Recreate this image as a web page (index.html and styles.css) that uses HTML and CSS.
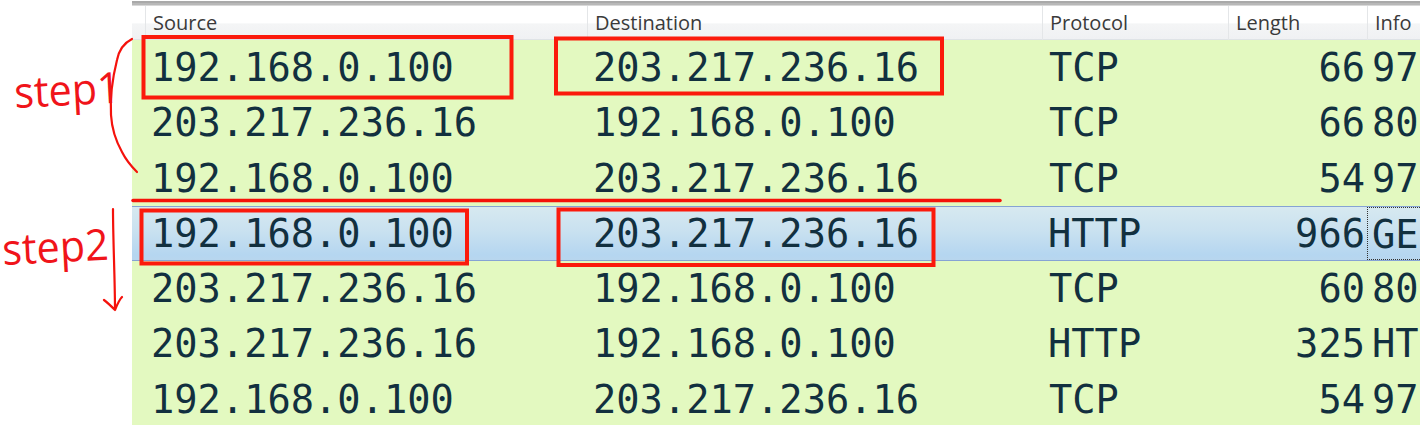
FILE: index.html
```html
<!DOCTYPE html>
<html lang="en">
<head>
<meta charset="utf-8">
<title>Packet list</title>
<link rel="stylesheet" href="styles.css">
</head>
<body>
<main class="stage">
  <section class="packets">
    <div class="topline"></div>
    <div class="head">
      <span class="hcell stub"></span>
      <span class="hcell">Source</span>
      <span class="hcell">Destination</span>
      <span class="hcell">Protocol</span>
      <span class="hcell">Length</span>
      <span class="hcell">Info</span>
    </div>
    <div class="row"><span class="stub"></span><span class="cell">192.168.0.100</span><span class="cell">203.217.236.16</span><span class="cell">TCP</span><span class="cell num">66</span><span class="cell info">97</span></div>
    <div class="row"><span class="stub"></span><span class="cell">203.217.236.16</span><span class="cell">192.168.0.100</span><span class="cell">TCP</span><span class="cell num">66</span><span class="cell info">80</span></div>
    <div class="row"><span class="stub"></span><span class="cell">192.168.0.100</span><span class="cell">203.217.236.16</span><span class="cell">TCP</span><span class="cell num">54</span><span class="cell info">97</span></div>
    <div class="row selected"><span class="stub"></span><span class="cell">192.168.0.100</span><span class="cell">203.217.236.16</span><span class="cell proto-wide">HTTP</span><span class="cell num">966</span><span class="cell info focus">GE</span></div>
    <div class="row"><span class="stub"></span><span class="cell">203.217.236.16</span><span class="cell">192.168.0.100</span><span class="cell">TCP</span><span class="cell num">60</span><span class="cell info">80</span></div>
    <div class="row"><span class="stub"></span><span class="cell">203.217.236.16</span><span class="cell">192.168.0.100</span><span class="cell proto-wide">HTTP</span><span class="cell num">325</span><span class="cell info">HT</span></div>
    <div class="row"><span class="stub"></span><span class="cell">192.168.0.100</span><span class="cell">203.217.236.16</span><span class="cell">TCP</span><span class="cell num">54</span><span class="cell info">97</span></div>
  </section>
  <svg class="ink" width="1420" height="425" viewBox="0 0 1420 425" aria-label="Annotations">
    <rect class="box" x="143.500" y="37" width="368" height="60.500"/>
    <rect class="box" x="556" y="38.500" width="386" height="55"/>
    <rect class="box" x="141.500" y="210.500" width="325.500" height="53"/>
    <rect class="box" x="558.500" y="209.500" width="375" height="55.500"/>
    <path class="line" d="M133 200.500 C400 201 700 201 1000 200.500"/>
    <path class="pen" d="M132 39 C124 43 119 50 117 60 C112 80 110 98 111 115 C112 132 117 143 122 152 C126 160 130 165 137 172"/>
    <path class="pen" d="M113 209 C113 240 115 280 115 310 M104 300 C108 303 112 307 115 310 C117 305 119 300 122 297"/>
    <text class="hand" transform="translate(15 108) rotate(-3) scale(.96 1)">step1</text>
    <text class="hand" transform="translate(3 265) rotate(-3) scale(.96 1)">step2</text>
  </svg>
</main>
</body>
</html>
```

FILE: styles.css
```css
* { box-sizing: border-box; }
html, body { margin: 0; padding: 0; background: #fff; overflow: hidden; }
.stage { position: relative; width: 1420px; height: 425px; overflow: hidden; }

.packets { margin-left: 132px; width: 1288px; display: flex; flex-direction: column; }
.topline { height: 5px; border-top: 2px solid #a9a9a9; border-bottom: 1px solid #d8d8d8; background: #b8b8b8; margin-top: 1px; }

.head, .row {
  display: grid;
  grid-template-columns: 13px 442px 455px 186px 139px 53px;
}
.head {
  height: 34px;
  background: linear-gradient(#fff 0, #fff 50%, #f4f5f6 55%, #f0f1f3 100%);
  border-bottom: 1px solid #dfe3e6;
  font: 20px/34px "Open Sans", "Liberation Sans", sans-serif;
  color: #3a3a3a;
}
.hcell { padding-left: 7px; border-left: 1px solid #e4e6e8; white-space: nowrap; }
.hcell.stub { padding: 0; border-left: 0; }

.row {
  height: 55.25px;
  background: #e3f9c0;
  font: 38.7px/56px "DejaVu Sans Mono", "Liberation Mono", monospace;
  color: #12303f;
}
.cell { padding-left: 6px; white-space: nowrap; overflow: hidden; }
.cell:nth-child(4) { padding-left: 7px; }
.cell.proto-wide:nth-child(4) { padding-left: 6px; }
.cell.num { padding: 0 2px 0 0; text-align: right; }
.cell.info { padding-left: 5px; }

.selected {
  background: linear-gradient(#d7e9f0 0, #c9e1f0 45%, #b5d6f0 90%, #b8d6ee 100%);
  border-top: 1px solid #86a3d4;
  border-bottom: 1px solid #86a3d4;
  line-height: 54px;
}
.cell.info.focus { border: 1px dotted #333; border-right: 0; padding-left: 4px; }

.ink { position: absolute; left: 0; top: 0; pointer-events: none; }
.box { fill: none; stroke: #fb1a0c; stroke-width: 4; }
.line { fill: none; stroke: #f51208; stroke-width: 3.500; stroke-linecap: round; }
.pen { fill: none; stroke: #f5120c; stroke-width: 2.200; stroke-linecap: round; stroke-linejoin: round; }
.hand { fill: #f0141a; font: 400 43px "Open Sans", "Noto Sans", sans-serif; }
```
